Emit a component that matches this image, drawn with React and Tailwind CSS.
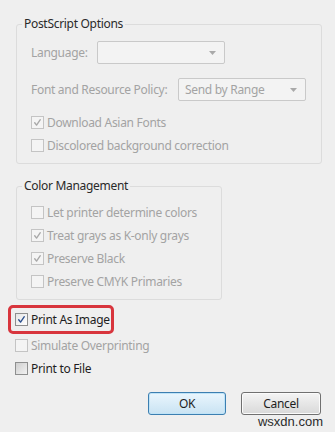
import React from 'react';

const Check = ({ color }) => (
  <svg viewBox="0 0 13 13" className="absolute inset-0 w-full h-full">
    <path d="M3.2 6.8 L5.4 9.6 L9.8 3.2" fill="none" stroke={color} strokeWidth="1.6" strokeLinecap="round" strokeLinejoin="round" />
  </svg>
);

const Checkbox = ({ checked, disabled, label }) => {
  const box = disabled
    ? 'border-[#c4c4c4] bg-[#f4f4f4]'
    : checked
      ? 'border-[#8e8f8f] bg-gradient-to-br from-[#e6e6e6] to-[#ffffff]'
      : 'border-[#8e8f8f] bg-gradient-to-br from-[#cfcfcf] to-[#f2f2f2]';
  return (
    <div className="flex items-center gap-[3px] h-[23px] whitespace-nowrap">
      <span className={`relative shrink-0 w-[13px] h-[13px] border ${box}`}>
        {checked && <Check color={disabled ? '#a8a8a8' : '#2a4f8e'} />}
      </span>
      <span className={disabled ? 'text-[#a3a3a3]' : 'text-[#1e1e1e]'}>{label}</span>
    </div>
  );
};

const Select = ({ value, className }) => (
  <div className={`flex items-center justify-between h-[23px] border border-[#c9c9c9] rounded-[2px] bg-[#f3f3f3] pl-[6px] pr-[8px] ${className}`}>
    <span className="text-[#a3a3a3]">{value}</span>
    <svg width="7" height="4" viewBox="0 0 7 4">
      <path d="M0 0 H7 L3.5 4 Z" fill="#a9a9a9" />
    </svg>
  </div>
);

export default function App() {
  return (
    <div className='relative w-[335px] h-[432px] overflow-hidden bg-[#efefef] font-["Noto_Sans",sans-serif] text-[12px] leading-[16px] tracking-[-0.3px]'>
      <div className="pt-[16px] pl-[16px]">
        <fieldset className="w-[306px] h-[148px] border border-[#dcdcdc] rounded-[3px] px-[14px]">
          <legend className="-ml-[9px] px-[2px] text-[#2a2a2a]">PostScript Options</legend>
          <div className="flex items-center mt-[9px]">
            <span className="w-[66px] text-[#a3a3a3]">Language:</span>
            <Select value="" className="w-[128px]" />
          </div>
          <div className="flex items-center mt-[14px]">
            <span className="w-[147px] text-[#a3a3a3]">Font and Resource Policy:</span>
            <Select value="Send by Range" className="w-[128px]" />
          </div>
          <div className="mt-[10px]">
            <Checkbox checked disabled label="Download Asian Fonts" />
            <Checkbox disabled label="Discolored background correction" />
          </div>
        </fieldset>

        <fieldset className="mt-[14px] w-[206px] h-[122px] border border-[#dcdcdc] rounded-[3px] px-[14px]">
          <legend className="-ml-[9px] px-[2px] text-[#2a2a2a]">Color Management</legend>
          <div className="mt-[7px]">
            <Checkbox disabled label="Let printer determine colors" />
            <Checkbox checked disabled label="Treat grays as K-only grays" />
            <Checkbox checked disabled label="Preserve Black" />
            <Checkbox disabled label="Preserve CMYK Primaries" />
          </div>
        </fieldset>
      </div>

      <div className="pl-[8px] mt-[5px]">
        <div className="w-[106px] h-[29px] border-[3px] border-[#d8353d] rounded-[5px] pl-[4px] flex items-center">
          <Checkbox checked label="Print As Image" />
        </div>
        <div className="pl-[7px]">
          <Checkbox disabled label="Simulate Overprinting" />
          <Checkbox label="Print to File" />
        </div>
      </div>

      <div className="flex justify-end gap-[15px] pr-[14px] mt-[12px]">
        <button className="w-[78px] h-[23px] rounded-[3px] border border-[#3c7fb1] bg-gradient-to-b from-[#eaf6fd] to-[#c9e3f3] shadow-[inset_0_0_0_1px_#bfe3f7] text-[#1e1e1e]">
          OK
        </button>
        <button className="w-[80px] h-[23px] rounded-[3px] border border-[#707070] bg-gradient-to-b from-[#f4f4f4] to-[#d9d9d9] shadow-[inset_0_0_0_1px_#fbfbfb] text-[#1e1e1e]">
          Cancel
        </button>
      </div>

      <span className='absolute right-[12px] bottom-[3px] font-["Liberation_Sans",sans-serif] text-[13px] leading-[14px] tracking-normal text-[#2b2b2b]'>
        wsxdn.com
      </span>
    </div>
  );
}
